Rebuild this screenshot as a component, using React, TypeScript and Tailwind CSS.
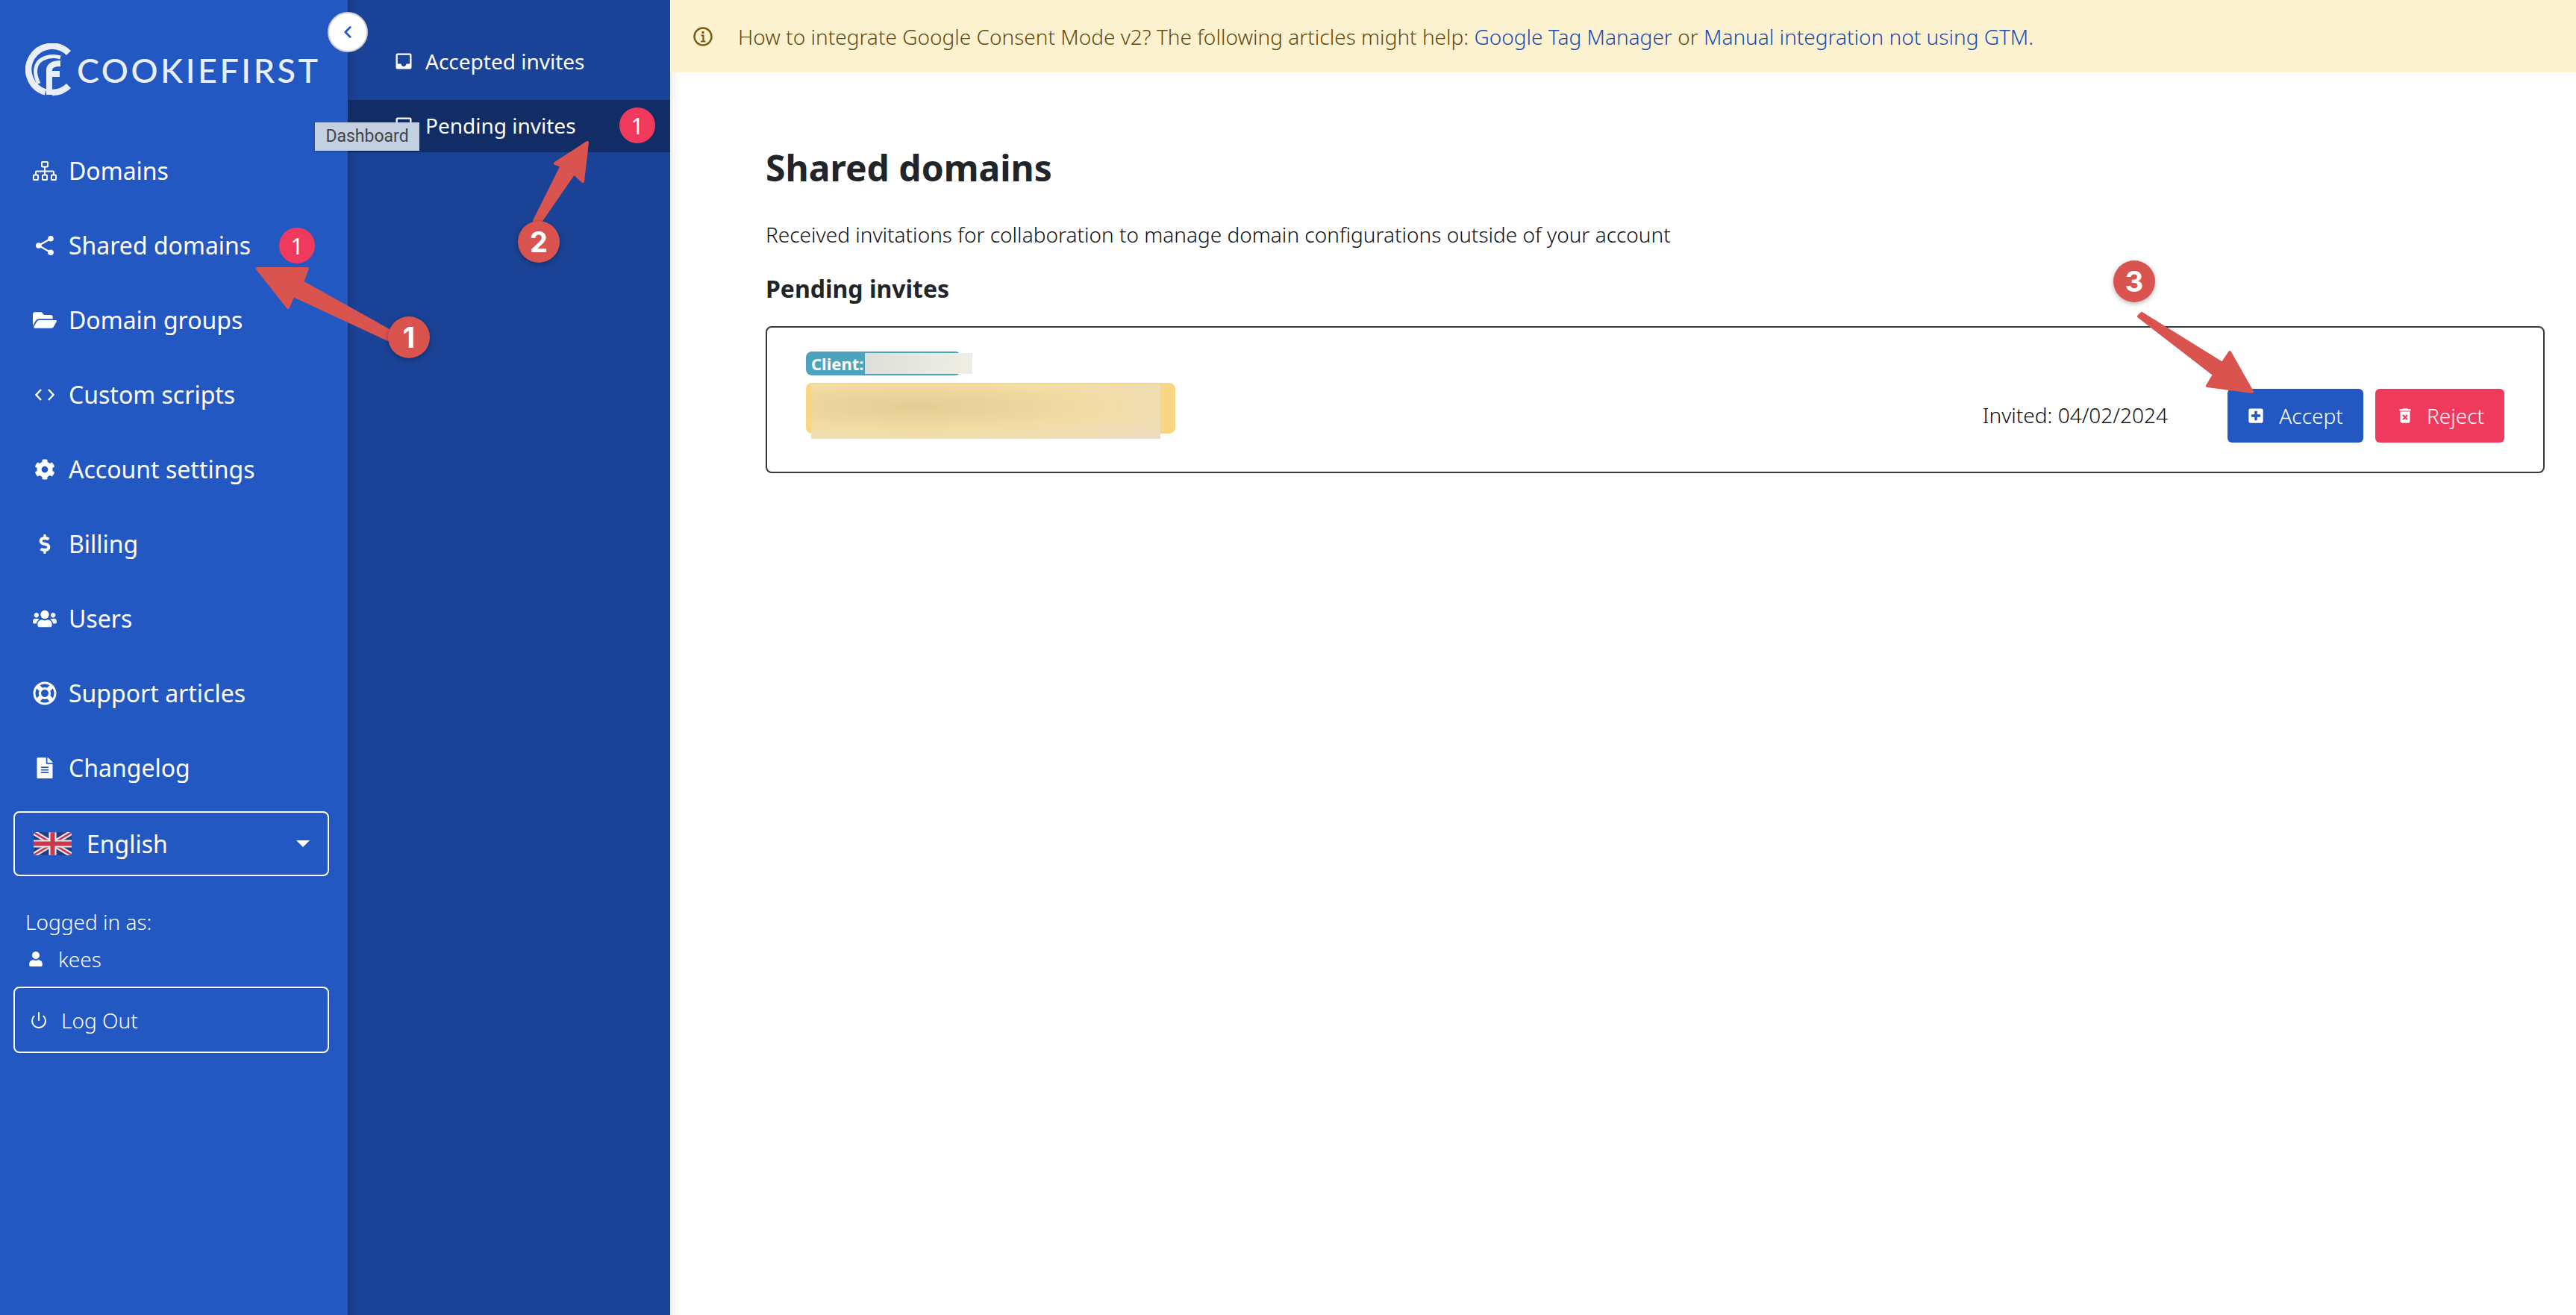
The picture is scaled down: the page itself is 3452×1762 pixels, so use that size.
import React from "react"
import { ChevronLeft, Power } from "lucide-react"
import {
	FaCog,
	FaDollarSign,
	FaFileAlt,
	FaFolderOpen,
	FaPlusSquare,
	FaRegLifeRing,
	FaUser,
	FaUsers
} from "react-icons/fa"
import { MdDeleteForever, MdInbox } from "react-icons/md"

function SitemapIcon() {
	return (
		<svg viewBox="0 0 32 26" className="h-[26px] w-[32px]" fill="none" stroke="currentColor" strokeWidth="2">
			<rect x="12" y="1" width="8" height="6.5" rx="0.8" />
			<path d="M16 7.5V18M4 18V14.5a1 1 0 0 1 1-1H27a1 1 0 0 1 1 1V18" />
			<rect x="1" y="18.5" width="6" height="6.5" rx="0.8" />
			<rect x="13" y="18.5" width="6" height="6.5" rx="0.8" />
			<rect x="25" y="18.5" width="6" height="6.5" rx="0.8" />
		</svg>
	)
}

function ShareIcon() {
	return (
		<svg viewBox="0 0 24 26" className="h-[26px] w-[24px]" fill="currentColor" stroke="currentColor">
			<path d="M3.8 13 20 3.8M3.8 13 20 22.2" strokeWidth="2.2" />
			<circle cx="3.8" cy="13" r="3.8" stroke="none" />
			<circle cx="20" cy="3.8" r="3.8" stroke="none" />
			<circle cx="20" cy="22.2" r="3.8" stroke="none" />
		</svg>
	)
}

function CodeIcon() {
	return (
		<svg viewBox="0 0 26 16" className="h-[16px] w-[26px]" fill="none" stroke="currentColor" strokeWidth="2.4">
			<path d="M8 1 1.5 8 8 15M18 1 24.5 8 18 15" />
		</svg>
	)
}

const NAV_ITEMS = [
	{ label: "Domains", icon: <SitemapIcon /> },
	{ label: "Shared domains", icon: <ShareIcon />, badge: true },
	{ label: "Domain groups", icon: <FaFolderOpen className="h-[32px] w-[32px]" /> },
	{ label: "Custom scripts", icon: <CodeIcon /> },
	{ label: "Account settings", icon: <FaCog className="h-[28px] w-[28px]" /> },
	{ label: "Billing", icon: <FaDollarSign className="h-[26px] w-[26px]" /> },
	{ label: "Users", icon: <FaUsers className="h-[32px] w-[32px]" /> },
	{ label: "Support articles", icon: <FaRegLifeRing className="h-[32px] w-[32px]" /> },
	{ label: "Changelog", icon: <FaFileAlt className="h-[28px] w-[28px]" /> }
]

function CountBadge() {
	return (
		<span className="flex h-[48px] w-[48px] items-center justify-center rounded-full bg-[#ef3a5d] text-[30px] text-white">
			1
		</span>
	)
}

function Logo() {
	return (
		<div className="flex items-center pl-[34px] pt-[58px]">
			<svg viewBox="0 0 64 72" className="h-[72px] w-[64px] shrink-0" fill="none" stroke="#e8eefa">
				<path d="M58 13 A31.5 31.5 0 1 0 27 65.5" strokeWidth="8.5" />
				<path d="M36 66 A31 31 0 0 0 58 57" strokeWidth="8.5" />
				<path d="M18 54 C11 40 12 27 23 21 C31 17 40 17 47 19" strokeWidth="5" />
				<path d="M32 69 V36 C32 30 38 27 47 27 M32 41 H46" strokeWidth="8" />
			</svg>
			<span className="ml-[5px] font-['Lato'] text-[45px] leading-[72px] font-medium tracking-[3.5px] text-[#e8eefa]">
				COOKIEFIRST
			</span>
		</div>
	)
}

function UkFlag() {
	return (
		<svg viewBox="0 0 60 36" className="h-[31px] w-[51px] shrink-0">
			<rect width="60" height="36" fill="#2b3a7a" />
			<path d="M0 0 60 36 M60 0 0 36" stroke="#e8e8ee" strokeWidth="8" />
			<path d="M0 0 60 36 M60 0 0 36" stroke="#c8394b" strokeWidth="3" />
			<path d="M30 0 V36 M0 18 H60" stroke="#e8e8ee" strokeWidth="12" />
			<path d="M30 0 V36 M0 18 H60" stroke="#c8394b" strokeWidth="7" />
		</svg>
	)
}

function Sidebar() {
	return (
		<aside className="z-20 flex w-[466px] shrink-0 flex-col bg-[#2358c3] text-white">
			<div className="h-[179px]">
				<Logo />
			</div>
			{NAV_ITEMS.map((item) => (
				<div key={item.label} className="flex h-[100px] items-center pl-[44px]">
					<span className="flex w-[32px] justify-center">{item.icon}</span>
					<span className="ml-[16px] text-[32px]">{item.label}</span>
					{item.badge && (
						<span className="ml-[38px]">
							<CountBadge />
						</span>
					)}
				</div>
			))}
			<div className="mt-[8px] mr-[25px] ml-[18px] flex h-[87px] items-center rounded-[8px] border-2 border-white pr-[24px] pl-[25px]">
				<UkFlag />
				<span className="ml-[20px] text-[32px]">English</span>
				<span className="ml-auto h-0 w-0 border-x-[9px] border-t-[9px] border-x-transparent border-t-white" />
			</div>
			<div className="mt-[42px] pl-[34px] text-[28px] leading-[38px] font-light">
				Logged in as:
			</div>
			<div className="mt-[12px] flex items-center pl-[38px] text-[28px] leading-[38px] font-light">
				<FaUser className="h-[20px] w-[20px]" />
				<span className="ml-[20px]">kees</span>
			</div>
			<div className="mt-[18px] mr-[25px] ml-[18px] flex h-[89px] items-center rounded-[8px] border-2 border-white pl-[20px] text-[28px] font-light">
				<Power className="h-[24px] w-[24px]" strokeWidth={2} />
				<span className="ml-[18px]">Log Out</span>
			</div>
		</aside>
	)
}

function SubNav() {
	return (
		<nav className="z-10 w-[432px] shrink-0 bg-[#1a4296] pt-[47px] text-[28px] text-white shadow-[inset_14px_0_14px_-14px_rgba(0,0,0,0.25)]">
			<div className="mb-[17px] flex h-[70px] items-center pl-[61px]">
				<MdInbox className="h-[28px] w-[28px]" />
				<span className="ml-[15px]">Accepted invites</span>
			</div>
			<div className="flex h-[70px] items-center bg-[#122d66] pr-[20px] pb-[2px] pl-[61px]">
				<MdInbox className="h-[28px] w-[28px]" />
				<span className="ml-[15px]">Pending invites</span>
				<span className="ml-auto">
					<CountBadge />
				</span>
			</div>
		</nav>
	)
}

function Banner() {
	return (
		<div className="flex h-[97px] items-center bg-[#fdf2d0] pl-[31px] text-[28px] font-light text-[#664a0c]">
			<svg viewBox="0 0 26 26" className="h-[26px] w-[26px] shrink-0" fill="none" stroke="#7a5a14">
				<circle cx="13" cy="13" r="11.5" strokeWidth="2.4" />
				<path d="M10.5 11.5H13.5V19M10 19.5H16.5" strokeWidth="2.2" />
				<circle cx="13" cy="7.5" r="1.7" fill="#7a5a14" stroke="none" />
			</svg>
			<p className="ml-[34px]">
				How to integrate Google Consent Mode v2? The following articles might help:{" "}
				<span className="text-[#1a4cb5]">Google Tag Manager</span> or{" "}
				<span className="text-[#1a4cb5]">Manual integration not using GTM.</span>
			</p>
		</div>
	)
}

function InviteCard() {
	return (
		<div className="mt-[28px] flex h-[197px] justify-between rounded-[8px] border-2 border-[#343a40] pr-[52px] pl-[52px]">
			<div className="relative pt-[32px]">
				<div className="h-[32px] w-[208px] rounded-[8px] bg-[#4da3ba] pl-[7px] text-[22px] leading-[32px] font-bold text-white">
					Client:
				</div>
				<div className="mt-[10px] h-[68px] w-[495px] rounded-[8px] bg-[#f8d683]" />
				{/* blurred out client name and domain */}
				<div className="absolute top-[34px] left-[79px] h-[28px] w-[144px] bg-[linear-gradient(100deg,#dcdfd5,#e6e8e0_50%,#f0eee4)]" />
				<div className="absolute top-[76px] left-[7px] h-[73px] w-[468px] bg-[radial-gradient(ellipse_at_30%_40%,#e3cd92,#f3dca4_50%,#eedcb8_85%,#e8dcc8)]" />
			</div>
			<div className="flex items-end pb-[39px]">
				<span className="mr-[80px] self-end pb-[16px] text-[28px] font-light text-[#111]">
					Invited: 04/02/2024
				</span>
				<button className="flex h-[72px] w-[182px] items-center justify-center rounded-[6px] bg-[#2358c3] text-[28px] font-light text-white">
					<FaPlusSquare className="h-[22px] w-[22px]" />
					<span className="ml-[20px]">Accept</span>
				</button>
				<button className="ml-[16px] flex h-[72px] w-[173px] items-center justify-center rounded-[6px] bg-[#ef3a5d] text-[28px] font-light text-white">
					<MdDeleteForever className="h-[26px] w-[26px]" />
					<span className="ml-[16px]">Reject</span>
				</button>
			</div>
		</div>
	)
}

function Annotations() {
	const red = "#d9544f"
	return (
		<svg
			viewBox="0 0 3452 1762"
			className="pointer-events-none absolute top-0 left-0 z-30 h-[1762px] w-[3452px]"
		>
			<g fill={red} stroke={red} strokeWidth="4" strokeLinejoin="round">
				<polygon points="345,360 412,360 405,378 525,445 520,455 393,396 386,412" />
				<polygon points="787,191 781,243 769,232 722,300 716,296 753,222 744,219" />
				<polygon points="3018,525 2958,517 2967,502 2866,424 2870,420 2978,487 2988,472" />
			</g>
			<g fill={red} className="drop-shadow-[0_2px_3px_rgba(0,0,0,0.3)]">
				<circle cx="548" cy="452" r="28" />
				<circle cx="722" cy="324" r="28" />
				<circle cx="2860" cy="377" r="28" />
			</g>
			<g fill="#fff" fontSize="38" fontWeight="700" textAnchor="middle" fontFamily="Inter, sans-serif">
				<text x="548" y="466">1</text>
				<text x="722" y="338">2</text>
				<text x="2860" y="391">3</text>
			</g>
		</svg>
	)
}

export default function App() {
	return (
		<div className="relative flex h-[1762px] w-[3452px] overflow-hidden bg-white font-['Noto_Sans',sans-serif] text-[#212529]">
			<Sidebar />
			<SubNav />
			<main className="min-w-0 flex-1 shadow-[inset_14px_0_14px_-14px_rgba(0,0,0,0.15)]">
				<Banner />
				<div className="pr-[42px] pl-[128px]">
					<h1 className="mt-[95px] text-[48px] leading-[66px] font-bold">Shared domains</h1>
					<p className="mt-[36px] text-[28px] leading-[40px] font-light text-[#111]">
						Received invitations for collaboration to manage domain configurations outside of your account
					</p>
					<h2 className="mt-[31px] text-[32px] leading-[44px] font-bold">Pending invites</h2>
					<InviteCard />
				</div>
			</main>
			{/* collapse toggle */}
			<button className="absolute top-[16px] left-[439px] z-30 flex h-[54px] w-[54px] items-center justify-center rounded-full border-2 border-[#ccc] bg-white text-[#2358c3]">
				<ChevronLeft className="h-[26px] w-[26px]" strokeWidth={2.5} />
			</button>
			{/* hover tooltip */}
			<div className="absolute top-[164px] left-[422px] z-30 flex h-[38px] w-[140px] items-center justify-center bg-[#c3d0e2] font-['Roboto'] text-[23px] text-[#444] shadow-[0_1px_3px_rgba(0,0,0,0.3)]">
				Dashboard
			</div>
			<Annotations />
		</div>
	)
}
